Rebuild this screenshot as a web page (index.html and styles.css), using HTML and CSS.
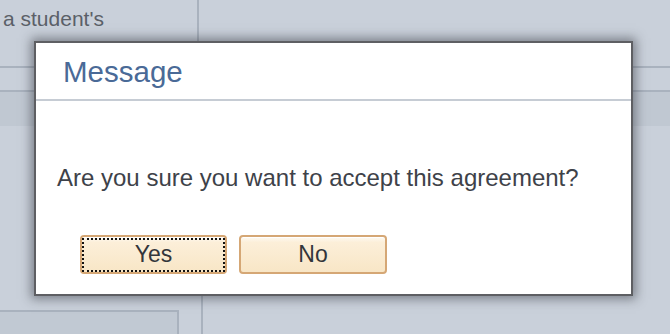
FILE: index.html
```html
<!DOCTYPE html>
<html lang="en">
<head>
<meta charset="utf-8">
<title>Message</title>
<link rel="stylesheet" href="styles.css">
</head>
<body>
<div class="page">
  <div class="top">
    <div class="top-cell">a student's</div>
  </div>
  <div class="rule-gap"></div>
  <div class="band"></div>
  <div class="spacer"></div>
  <div class="bottom">
    <div class="box"></div>
    <div class="vline"></div>
  </div>
</div>

<div class="dialog" role="dialog" aria-labelledby="dlg-title">
  <div class="dialog-header">
    <h1 class="dialog-title" id="dlg-title">Message</h1>
  </div>
  <div class="dialog-body">
    <p class="dialog-text">Are you sure you want to accept this agreement?</p>
    <div class="dialog-buttons">
      <button class="btn btn-focus" type="button">Yes</button>
      <button class="btn" type="button">No</button>
    </div>
  </div>
</div>
</body>
</html>
```

FILE: styles.css
```css
html, body {
  margin: 0;
  padding: 0;
}
body {
  width: 670px;
  height: 334px;
  overflow: hidden;
  background: #c9d0da;
  font-family: "Liberation Sans", Arial, sans-serif;
  position: relative;
}
.page {
  display: flex;
  flex-direction: column;
  height: 334px;
}
.top {
  display: flex;
  height: 66px;
}
.top-cell {
  width: 199px;
  border-right: 2px solid #a9b2be;
  color: #5b6068;
  font-size: 21px;
  line-height: 24px;
  padding: 7px 0 0 3px;
  box-sizing: border-box;
}
.rule-gap {
  height: 22px;
  border-top: 2px solid #a9b2be;
}
.band {
  height: 34px;
  border-top: 2px solid #a9b2be;
  background: #c0c8d2;
}
.spacer {
  height: 164px;
}
.bottom {
  display: flex;
  align-items: flex-end;
  height: 44px;
}
.box {
  width: 177px;
  height: 22px;
  border-top: 2px solid #a9b2be;
  border-right: 2px solid #a9b2be;
  background: #c1c9d3;
}
.vline {
  margin-left: 22px;
  width: 2px;
  height: 44px;
  background: #a9b2be;
}

.dialog {
  position: absolute;
  left: 34px;
  top: 41px;
  width: 595px;
  height: 251px;
  background: #ffffff;
  border: 2px solid #5e5f63;
  box-shadow: 0 0 10px 3px rgba(45, 47, 55, 0.5);
  display: flex;
  flex-direction: column;
}
.dialog-header {
  border-bottom: 2px solid #c6ccd4;
  padding: 12px 0 0 27px;
  box-sizing: border-box;
  height: 58px;
}
.dialog-title {
  margin: 0;
  font-weight: normal;
  font-size: 29.5px;
  line-height: 33px;
  color: #4a6a97;
}
.dialog-body {
  display: flex;
  flex-direction: column;
  padding: 63px 0 0 21px;
}
.dialog-text {
  margin: 0;
  font-size: 24px;
  line-height: 28px;
  color: #3e4249;
}
.dialog-buttons {
  display: flex;
  gap: 12px;
  margin-top: 43px;
  padding-left: 23px;
}
.btn {
  position: relative;
  width: 147px;
  height: 39px;
  box-sizing: border-box;
  border: 2px solid #d5a775;
  border-radius: 4px;
  background: linear-gradient(to bottom, #fefaf2 0%, #fcefd9 15%, #f8e6c6 100%);
  box-shadow: inset 0 1px 0 #ffffff;
  font-family: "Liberation Sans", Arial, sans-serif;
  font-size: 23px;
  line-height: 35px;
  color: #33363b;
  padding: 0;
  text-align: center;
}
.btn + .btn {
  width: 148px;
}
.btn-focus::after {
  content: "";
  position: absolute;
  left: 0;
  top: 1px;
  right: 0;
  bottom: 0;
  border: 2px dotted #111111;
}
```
